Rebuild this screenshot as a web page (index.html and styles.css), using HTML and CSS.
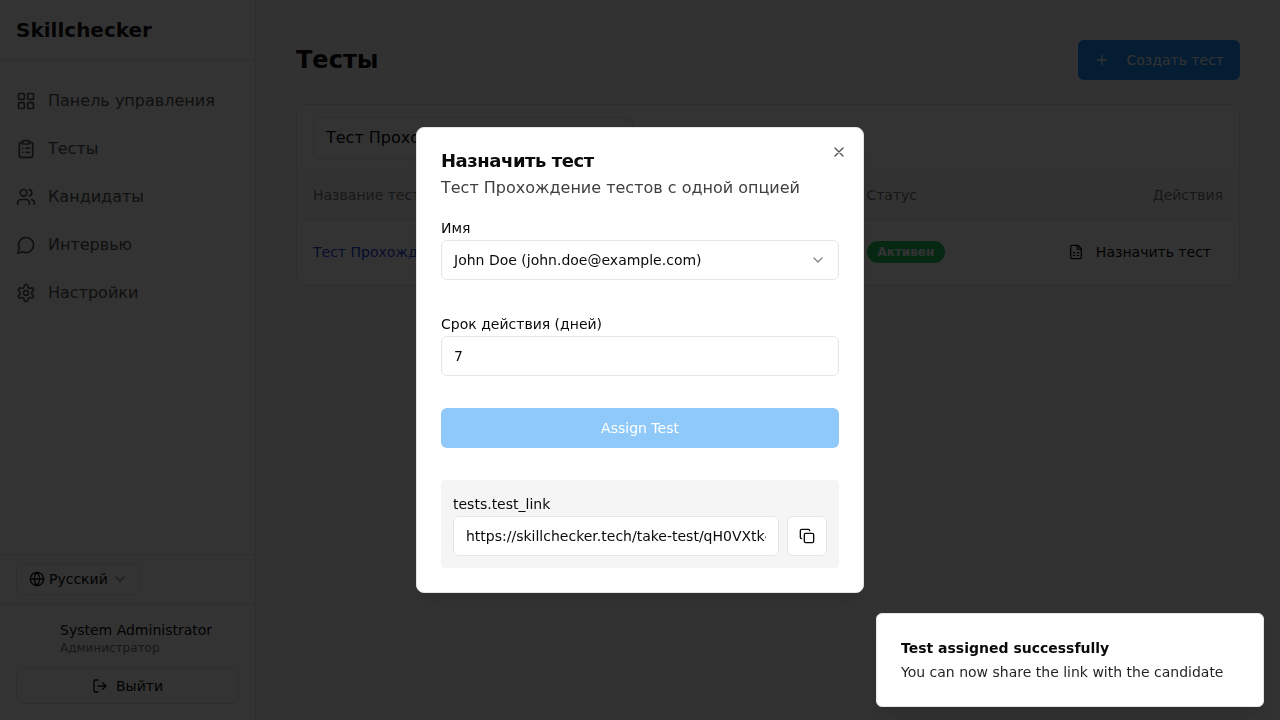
FILE: index.html
```html
<!DOCTYPE html>
<html lang="ru">
<head>
<meta charset="utf-8">
<title>Skillchecker</title>
<link rel="stylesheet" href="styles.css">
</head>
<body>
<div class="app">
  <aside class="sidebar">
    <div class="brand">Skillchecker</div>
    <nav class="nav">
      <a class="nav-item"><svg class="icon i20" viewBox="0 0 24 24"><rect x="3" y="3" width="7" height="7" rx="1"/><rect x="14" y="3" width="7" height="7" rx="1"/><rect x="14" y="14" width="7" height="7" rx="1"/><rect x="3" y="14" width="7" height="7" rx="1"/></svg>Панель управления</a>
      <a class="nav-item"><svg class="icon i20" viewBox="0 0 24 24"><rect x="8" y="2" width="8" height="4" rx="1"/><path d="M16 4h2a2 2 0 0 1 2 2v14a2 2 0 0 1-2 2H6a2 2 0 0 1-2-2V6a2 2 0 0 1 2-2h2M12 11h4M12 16h4M8 11h.01M8 16h.01"/></svg>Тесты</a>
      <a class="nav-item"><svg class="icon i20" viewBox="0 0 24 24"><path d="M16 21v-2a4 4 0 0 0-4-4H6a4 4 0 0 0-4 4v2"/><circle cx="9" cy="7" r="4"/><path d="M22 21v-2a4 4 0 0 0-3-3.87M16 3.13a4 4 0 0 1 0 7.75"/></svg>Кандидаты</a>
      <a class="nav-item"><svg class="icon i20" viewBox="0 0 24 24"><path d="M7.9 20A9 9 0 1 0 4 16.1L2 22Z"/></svg>Интервью</a>
      <a class="nav-item"><svg class="icon i20" viewBox="0 0 24 24"><path d="M12.22 2h-.44a2 2 0 0 0-2 2v.18a2 2 0 0 1-1 1.73l-.43.25a2 2 0 0 1-2 0l-.15-.08a2 2 0 0 0-2.73.73l-.22.38a2 2 0 0 0 .73 2.73l.15.1a2 2 0 0 1 1 1.72v.51a2 2 0 0 1-1 1.74l-.15.09a2 2 0 0 0-.73 2.73l.22.38a2 2 0 0 0 2.73.73l.15-.08a2 2 0 0 1 2 0l.43.25a2 2 0 0 1 1 1.73V20a2 2 0 0 0 2 2h.44a2 2 0 0 0 2-2v-.18a2 2 0 0 1 1-1.73l.43-.25a2 2 0 0 1 2 0l.15.08a2 2 0 0 0 2.73-.73l.22-.39a2 2 0 0 0-.73-2.73l-.15-.08a2 2 0 0 1-1-1.74v-.5a2 2 0 0 1 1-1.74l.15-.09a2 2 0 0 0 .73-2.73l-.22-.38a2 2 0 0 0-2.73-.73l-.15.08a2 2 0 0 1-2 0l-.43-.25a2 2 0 0 1-1-1.73V4a2 2 0 0 0-2-2z"/><circle cx="12" cy="12" r="3"/></svg>Настройки</a>
    </nav>
    <div class="language">
      <button class="language-button"><svg class="icon i16" viewBox="0 0 24 24"><circle cx="12" cy="12" r="10"/><path d="M12 2a14.5 14.5 0 0 0 0 20 14.5 14.5 0 0 0 0-20M2 12h20"/></svg>Русский<svg class="icon i16 chevron" viewBox="0 0 24 24"><path d="m6 9 6 6 6-6"/></svg></button>
    </div>
    <div class="account">
      <div class="user"><div class="user-name">System Administrator</div><div class="user-role">Администратор</div></div>
      <button class="logout"><svg class="icon i16" viewBox="0 0 24 24"><path d="M9 21H5a2 2 0 0 1-2-2V5a2 2 0 0 1 2-2h4M16 17l5-5-5-5M21 12H9"/></svg>Выйти</button>
    </div>
  </aside>
  <main class="main">
    <header class="page-head">
      <h1 class="page-title">Тесты</h1>
      <button class="create"><svg class="icon i16" viewBox="0 0 24 24"><path d="M5 12h14M12 5v14"/></svg>Создать тест</button>
    </header>
    <section class="card">
      <div class="filter"><div class="search">Тест Прохождение тестов</div></div>
      <div class="row row-head"><div>Название теста</div><div>Статус</div><div class="actions-head">Действия</div></div>
      <div class="row row-body">
        <a class="test-link">Тест Прохождение</a>
        <div><span class="badge">Активен</span></div>
        <button class="assign"><svg class="icon i16" viewBox="0 0 24 24"><path d="M15 2H6a2 2 0 0 0-2 2v16a2 2 0 0 0 2 2h12a2 2 0 0 0 2-2V7Z"/><path d="M14 2v4a2 2 0 0 0 2 2h4M8 13h2M14 13h2M8 17h2M14 17h2"/></svg>Назначить тест</button>
      </div>
    </section>
  </main>
</div>
<div class="overlay">
  <div class="dialog" role="dialog">
    <svg class="icon i16 close" viewBox="0 0 24 24"><path d="M18 6 6 18M6 6l12 12"/></svg>
    <h2 class="dialog-title">Назначить тест</h2>
    <p class="dialog-text">Тест Прохождение тестов с одной опцией</p>
    <div class="label">Имя</div>
    <div class="field select"><span>John Doe (john.doe@example.com)</span><svg class="icon i16 chevron" viewBox="0 0 24 24"><path d="m6 9 6 6 6-6"/></svg></div>
    <div class="label label-days">Срок действия (дней)</div>
    <div class="field">7</div>
    <button class="submit">Assign Test</button>
    <div class="result">
      <div class="label">tests.test_link</div>
      <div class="link-row">
        <input class="field link-field" readonly value="https://skillchecker.tech/take-test/qH0VXtk4">
        <button class="copy"><svg class="icon i16" viewBox="0 0 24 24"><rect x="8" y="8" width="14" height="14" rx="2"/><path d="M4 16c-1.1 0-2-.9-2-2V4c0-1.1.9-2 2-2h10c1.1 0 2 .9 2 2"/></svg></button>
      </div>
    </div>
  </div>
</div>
<div class="toast"><div class="toast-title">Test assigned successfully</div><div class="toast-text">You can now share the link with the candidate</div></div>
</body>
</html>
```
FILE: styles.css
```css
* { box-sizing: border-box; }
body { margin: 0; height: 720px; overflow: hidden; background: #fafafa; color: #0a0a0a; font: 14px/20px "DejaVu Sans", sans-serif; }
h1, h2, p { margin: 0; }
button { font: inherit; color: inherit; display: flex; align-items: center; justify-content: center; border: 1px solid #e5e5e5; border-radius: 6px; background: #fff; padding: 0; }
input { font: inherit; color: inherit; }
.icon { fill: none; stroke: currentColor; stroke-width: 2; stroke-linecap: round; stroke-linejoin: round; flex: none; }
.i16 { width: 16px; height: 16px; }
.i20 { width: 20px; height: 20px; }
.chevron { opacity: .5; }

.app { display: flex; height: 720px; }
.sidebar { width: 256px; flex: none; display: flex; flex-direction: column; background: #fff; border-right: 1px solid #e5e5e5; }
.brand { height: 61px; padding: 16px; border-bottom: 1px solid #e5e5e5; font-size: 20px; line-height: 28px; font-weight: 700; color: #171717; }
.nav { flex: 1; display: flex; flex-direction: column; gap: 8px; padding: 20px 16px; }
.nav-item { display: flex; align-items: center; gap: 12px; height: 40px; font-size: 16px; color: #525252; }
.language { height: 49px; padding: 8px 16px; border-top: 1px solid #e5e5e5; }
.language-button { width: 125px; height: 32px; justify-content: flex-start; padding: 0 12px; gap: 4px; }
.account { height: 117px; padding: 16px; border-top: 1px solid #e5e5e5; }
.user { padding-left: 44px; margin-bottom: 12px; }
.user-name { line-height: 20px; }
.user-role { font-size: 12px; line-height: 16px; color: #737373; }
.logout { width: 100%; height: 36px; gap: 8px; }

.main { flex: 1; padding: 40px; }
.page-head { display: flex; align-items: center; justify-content: space-between; height: 40px; margin-bottom: 24px; }
.page-title { font-size: 24px; line-height: 32px; }
.create { width: 162px; height: 40px; padding: 0 16px; justify-content: space-between; border: 0; background: #1890ff; color: #fafafa; }
.card { height: 182px; border: 1px solid #e5e5e5; border-radius: 8px; background: #fff; overflow: hidden; }
.filter { height: 66px; padding: 12px 16px; }
.search { width: 320px; height: 42px; padding: 0 12px; border: 1px solid #e5e5e5; border-radius: 6px; font-size: 16px; line-height: 40px; }
.row { display: grid; grid-template-columns: 553.4px 160px 1fr; align-items: center; padding: 0 16px; }
.row-head { height: 49px; background: #f9fafb; border-bottom: 1px solid #e5e5e5; color: #737373; }
.actions-head { text-align: right; }
.row-body { height: 64px; }
.test-link { color: #2043d8; }
.badge { display: block; width: fit-content; height: 22px; margin-left: .5px; padding: 0 10.5px; border-radius: 11px; background: #22c55e; color: #fff; font-size: 12px; line-height: 22px; font-weight: 700; }
.assign { border: 0; background: none; gap: 12px; justify-self: end; margin-right: 12px; }

.overlay { position: fixed; inset: 0; display: flex; align-items: center; justify-content: center; background: rgba(0, 0, 0, .8); }
.dialog { position: relative; width: 448px; height: 466px; padding: 24px; border: 1px solid #e5e5e5; border-radius: 8px; background: #fff; box-shadow: 0 10px 15px -3px rgba(0, 0, 0, .1); }
.close { position: absolute; top: 16px; right: 16px; opacity: .7; }
.dialog-title { font-size: 18px; line-height: 18px; letter-spacing: -.45px; }
.dialog-text { margin: 6px 0 18px; font-size: 16px; line-height: 24px; color: #404040; }
.label { line-height: 20px; }
.field { height: 40px; padding: 0 12px; margin-top: 2px; border: 1px solid #e5e5e5; border-radius: 6px; background: #fff; line-height: 38px; }
.select { display: flex; align-items: center; justify-content: space-between; }
.label-days { margin-top: 34px; }
.submit { width: 100%; height: 40px; margin-top: 32px; border: 0; background: #8fc9fa; color: #fff; }
.result { margin-top: 32px; height: 88px; padding: 14px 12px; border-radius: 4px; background: #f5f5f5; }
.link-row { display: flex; gap: 8px; margin-top: 2px; }
.link-field { flex: 1; min-width: 0; margin: 0; line-height: 20px; }
.copy { width: 40px; height: 40px; }

.toast { position: fixed; right: 16px; bottom: 13px; width: 388px; height: 94px; padding: 24px; border: 1px solid #e5e5e5; border-radius: 6px; background: #fff; box-shadow: 0 10px 15px -3px rgba(0, 0, 0, .1); }
.toast-title { font-weight: 700; }
.toast-text { margin-top: 4px; opacity: .9; }
```
